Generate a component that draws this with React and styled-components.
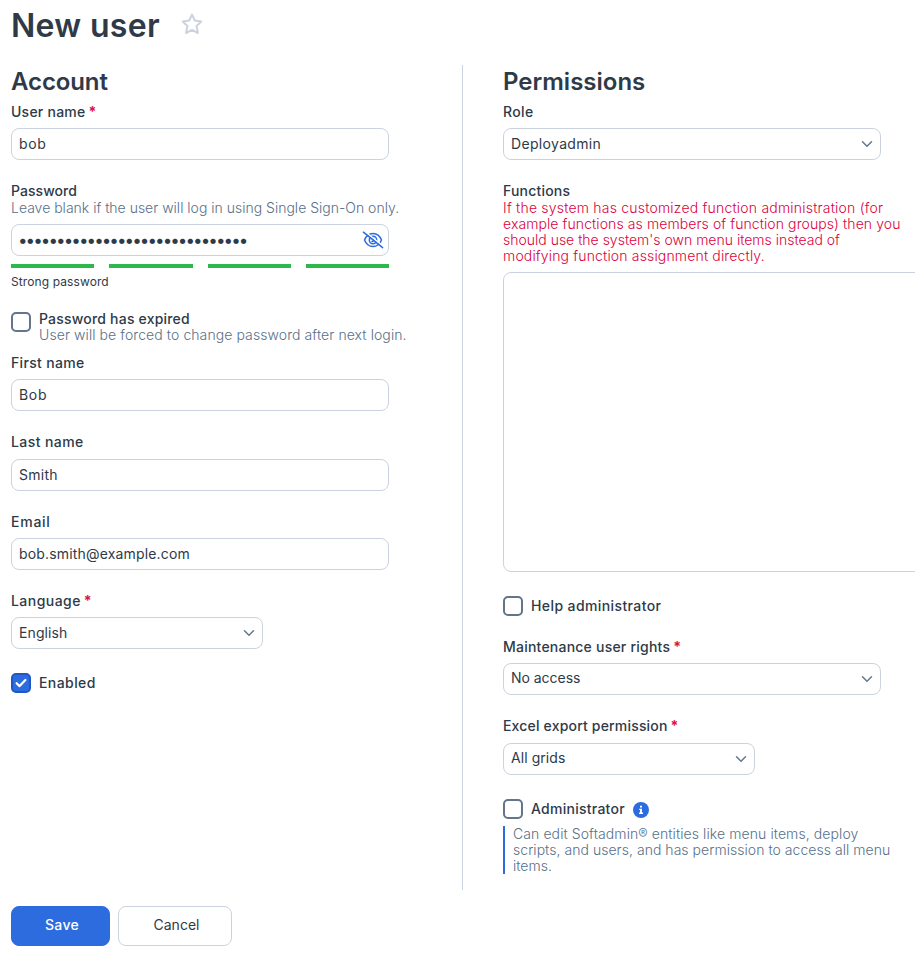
import styled, { createGlobalStyle } from 'styled-components';

const GlobalStyle = createGlobalStyle`
  * {
    box-sizing: border-box;
  }

  body {
    margin: 0;
    background: #fff;
    color: #2e3a48;
    font-family: Inter, "Noto Sans", sans-serif;
    font-size: 14px;
    line-height: 16px;
    overflow: hidden;
  }
`;

const Page = styled.div`
  width: 915px;
  height: 960px;
  padding: 5px 0 0 11px;
  overflow: hidden;
`;

const Header = styled.header`
  display: flex;
  align-items: center;
  gap: 21px;
  height: 40px;
  margin-bottom: 20px;

  svg {
    margin-top: -3px;
  }
`;

const Title = styled.h1`
  margin: 0;
  padding-top: 1px;
  font-size: 32px;
  line-height: 40px;
  font-weight: 600;
  letter-spacing: 0.32px;
`;

const Columns = styled.main`
  display: flex;
  height: 825px;
`;

const Heading = styled.h2`
  margin: 0 0 6px;
  padding-top: 1px;
  font-size: 24px;
  line-height: 32px;
  font-weight: 600;
  letter-spacing: ${props => props.$tracking || 0}px;
`;

const Field = styled.div`
  margin-bottom: ${props => props.$gap ?? 23}px;
`;

const Label = styled.div`
  font-weight: 500;
  white-space: nowrap;
  letter-spacing: ${props => props.$tracking || 0}px;
`;

const Required = styled.span`
  margin-left: 3px;
  color: #e0103f;
  font-weight: 700;
`;

const Line = styled.span`
  display: block;
  white-space: nowrap;
  letter-spacing: ${props => props.$tracking || 0}px;
`;

const Help = styled.div`
  margin-top: 1px;
  color: ${props => props.$warning ? '#dc003c' : '#587089'};
  font-weight: 300;
`;

const Box = styled.div`
  display: flex;
  align-items: center;
  justify-content: space-between;
  width: ${props => props.$width || 378}px;
  height: 32px;
  margin-top: 8.33px;
  padding: 0 7px;
  border: 1px solid #cbd3e0;
  border-radius: 8px;
  letter-spacing: ${props => props.$tracking || 0}px;

  svg {
    flex: none;
  }
`;

const Value = styled.span`
  padding-bottom: ${props => props.$raised ? 2 : 0}px;
`;

const Column = styled.section`
  flex: none;
  width: ${props => props.$width}px;

  & + & {
    border-left: 1px solid #cbd3e0;
    padding-left: 40px;

    ${Label}, ${Heading}, ${Value} {
      padding-left: 1px;
    }
  }
`;

const Dots = styled.span`
  margin-left: -1px;
  padding-bottom: 1px;
  font-size: 17px;
  letter-spacing: -1.95px;
`;

const RevealButton = styled.span`
  display: flex;
  margin-right: -3px;
`;

const FunctionList = styled.div`
  width: 520px;
  height: 300px;
  margin: 8px 0 24px;
  border: 1px solid #cbd3e0;
  border-radius: 8px;
`;

const Strength = styled.div`
  display: grid;
  grid-template-columns: repeat(4, 1fr);
  gap: 15px;
  width: 378px;
  height: 4px;
  margin: 8px 0 6px;
`;

const StrengthBar = styled.div`
  background: #2db84d;
`;

const StrengthText = styled.div`
  font-size: 12px;
  letter-spacing: 0.1px;
`;

const CheckRow = styled.div`
  display: flex;
  align-items: ${props => props.$top ? 'flex-start' : 'center'};
  gap: 8px;
  min-height: 20px;
  margin-bottom: ${props => props.$gap || 0}px;
`;

const Check = styled.span`
  display: grid;
  place-items: center;
  flex: none;
  width: 20px;
  height: 20px;
  border: 2px solid ${props => props.$checked ? '#1f57c3' : '#64748b'};
  border-radius: 5px;
  background: ${props => props.$checked ? '#2d6cdf' : '#fff'};
`;

const ExpiredText = styled.div`
  margin-top: -1px;

  ${Help} {
    margin-top: 0;
  }
`;

const InfoBadge = styled.span`
  display: flex;
  padding-top: 2px;
`;

const Note = styled.div`
  margin-top: 7px;
  padding-left: 8px;
  border-left: 2px solid #2d6cdf;
  color: #587089;
  font-weight: 300;
`;

const Actions = styled.footer`
  display: flex;
  gap: 8px;
  margin-top: 16px;
`;

const Button = styled.button`
  width: ${props => props.$primary ? 99 : 114}px;
  height: 40px;
  padding: 0 0 2px 3px;
  border: 1px solid ${props => props.$primary ? '#2d6cdf' : '#cbd3e0'};
  border-radius: 8px;
  background: ${props => props.$primary ? '#2d6cdf' : '#fff'};
  color: ${props => props.$primary ? '#fff' : '#2e3a48'};
  font: ${props => props.$primary ? 500 : 400} 14px/16px Inter, sans-serif;
  letter-spacing: ${props => props.$primary ? 0.3 : 0}px;
`;

const StarIcon = () => (
  <svg width="22" height="22" viewBox="0 0 22 22" fill="none" stroke="#cbd3e0" strokeWidth="2" strokeLinejoin="round">
    <path d="M11 1.6L13.8 7.5L20.4 8.4L15.6 13L16.9 20L11 16.8L5.1 20L6.4 13L1.6 8.4L8.2 7.5Z" />
  </svg>
);

const EyeOffIcon = () => (
  <svg width="22" height="18" viewBox="0 0 22 18" fill="none" stroke="#2d6cdf" strokeWidth="1.5" strokeLinecap="round">
    <path d="M2.5 9C4.2 4.7 7.3 2.5 11 2.5S17.8 4.7 19.5 9C17.8 13.3 14.7 15.5 11 15.5S4.2 13.3 2.5 9Z" />
    <circle cx="11" cy="9" r="3.7" />
    <path d="M11 7.2A1.8 1.8 0 0 1 10 10.5" />
    <path d="M2.4 .2L21.4 15.4" stroke="#fff" />
    <path d="M1.4 1.2L20.6 16.6" />
  </svg>
);

const Chevron = () => (
  <svg width="12" height="8" viewBox="0 0 12 8" fill="none" stroke="#64788f" strokeWidth="1.5" strokeLinecap="round" strokeLinejoin="round">
    <path d="M1.5 1.8L6 6.3L10.5 1.8" />
  </svg>
);

const CheckIcon = () => (
  <svg width="12" height="10" viewBox="0 0 12 10" fill="none" stroke="#fff" strokeWidth="2.2" strokeLinecap="round" strokeLinejoin="round">
    <path d="M1.6 5.2L4.6 8.1L10.4 2" />
  </svg>
);

const InfoIcon = () => (
  <svg width="16" height="16" viewBox="0 0 16 16">
    <circle cx="8" cy="8" r="8" fill="#2d6cdf" />
    <path d="M7 3.8H9V5.6H7ZM6.2 6.8H9V10.6H10V12H6V10.6H7V8.1H6.2Z" fill="#fff" />
  </svg>
);

function FormField({ label, tracking, required, help, gap, children }) {
  return (
    <Field $gap={gap}>
      <Label $tracking={tracking}>
        {label}
        {required && <Required>*</Required>}
      </Label>
      {help}
      {children}
    </Field>
  );
}

function Select({ value, width, tracking, raised }) {
  return (
    <Box $width={width} $tracking={tracking}>
      <Value $raised={raised}>{value}</Value>
      <Chevron />
    </Box>
  );
}

export default function App() {
  return (
    <Page>
      <GlobalStyle />
      <Header>
        <Title>New user</Title>
        <StarIcon />
      </Header>
      <Columns>
        <Column $width={451}>
          <Heading $tracking={-0.1}>Account</Heading>
          <FormField label='User name' tracking={0.24} required gap={22.67}>
            <Box $tracking={0.7}>bob</Box>
          </FormField>
          <FormField
            label='Password'
            tracking={0.05}
            gap={21.67}
            help={<Help><Line>Leave blank if the user will log in using Single Sign-On only.</Line></Help>}
          >
            <Box>
              <Dots>{'•'.repeat(30)}</Dots>
              <RevealButton><EyeOffIcon /></RevealButton>
            </Box>
            <Strength>
              <StrengthBar />
              <StrengthBar />
              <StrengthBar />
              <StrengthBar />
            </Strength>
            <StrengthText>Strong password</StrengthText>
          </FormField>
          <CheckRow $top $gap={12}>
            <Check />
            <ExpiredText>
              <Label $tracking={0.2}>Password has expired</Label>
              <Help><Line $tracking={0.085}>User will be forced to change password after next login.</Line></Help>
            </ExpiredText>
          </CheckRow>
          <FormField label='First name' tracking={0.33}>
            <Box $tracking={0.7}>Bob</Box>
          </FormField>
          <FormField label='Last name' tracking={0.41}>
            <Box $tracking={0.27}>Smith</Box>
          </FormField>
          <FormField label='Email' tracking={0.75}>
            <Box $tracking={0.167}>bob.smith@example.com</Box>
          </FormField>
          <FormField label='Language' tracking={0.45} required gap={23.33}>
            <Select value='English' width={252} tracking={0.1} />
          </FormField>
          <CheckRow>
            <Check $checked><CheckIcon /></Check>
            <Label $tracking={0.42}>Enabled</Label>
          </CheckRow>
        </Column>
        <Column $width={453}>
          <Heading>Permissions</Heading>
          <FormField label='Role' tracking={0.38} gap={22.67}>
            <Select value='Deployadmin' tracking={0.33} />
          </FormField>
          <FormField
            label='Functions'
            tracking={0.2}
            gap={0}
            help={
              <Help $warning>
                <Line $tracking={0.205}>If the system has customized function administration (for</Line>
                <Line $tracking={0.09}>example functions as members of function groups) then you</Line>
                <Line>should use the system's own menu items instead of</Line>
                <Line $tracking={0.16}>modifying function assignment directly.</Line>
              </Help>
            }
          >
            <FunctionList />
          </FormField>
          <CheckRow $gap={23}>
            <Check />
            <Label $tracking={0.4}>Help administrator</Label>
          </CheckRow>
          <FormField label='Maintenance user rights' tracking={0.22} required>
            <Select value='No access' tracking={-0.036} raised />
          </FormField>
          <FormField label='Excel export permission' tracking={0.18} required gap={24.33}>
            <Select value='All grids' width={252} tracking={0.07} raised />
          </FormField>
          <CheckRow>
            <Check />
            <Label $tracking={0.26}>Administrator</Label>
            <InfoBadge><InfoIcon /></InfoBadge>
          </CheckRow>
          <Note>
            <Line $tracking={0.09}>Can edit Softadmin® entities like menu items, deploy</Line>
            <Line $tracking={0.04}>scripts, and users, and has permission to access all menu</Line>
            <Line>items.</Line>
          </Note>
        </Column>
      </Columns>
      <Actions>
        <Button $primary>Save</Button>
        <Button>Cancel</Button>
      </Actions>
    </Page>
  );
}
